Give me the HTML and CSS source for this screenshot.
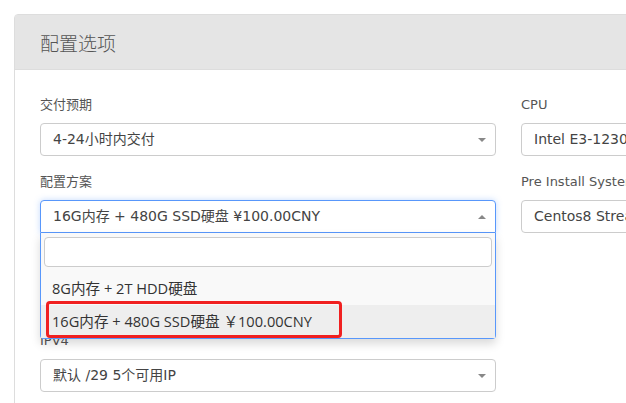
FILE: index.html
```html
<!DOCTYPE html>
<html lang="zh-CN">
<head>
<meta charset="utf-8">
<title>配置选项</title>
<link rel="stylesheet" href="styles.css">
</head>
<body>
<div class="panel">
  <div class="panel-heading">配置选项</div>
  <div class="panel-body">
    <div class="col">
      <div class="group">
        <div class="label">交付预期</div>
        <div class="select"><span class="value">4-24小时内交付</span><span class="arrow down"></span></div>
      </div>
      <div class="group group-tall">
        <div class="label">配置方案</div>
        <div class="select-wrap">
          <div class="select open"><span class="value">16G内存 + 480G SSD硬盘 ¥100.00CNY</span><span class="arrow up"></span></div>
          <div class="dropdown">
            <div class="search"></div>
            <div class="option">8G内存 + 2T HDD硬盘</div>
            <div class="option active">16G内存 + 480G SSD硬盘 ￥100.00CNY</div>
            <div class="mark"></div>
          </div>
        </div>
      </div>
      <div class="group">
        <div class="label">IPV4</div>
        <div class="select"><span class="value">默认 /29 5个可用IP</span><span class="arrow down"></span></div>
      </div>
    </div>
    <div class="col">
      <div class="group">
        <div class="label">CPU</div>
        <div class="select"><span class="value">Intel E3-1230 v3</span><span class="arrow down"></span></div>
      </div>
      <div class="group">
        <div class="label">Pre Install System</div>
        <div class="select"><span class="value">Centos8 Stream</span><span class="arrow down"></span></div>
      </div>
    </div>
  </div>
</div>
</body>
</html>
```

FILE: styles.css
```css
html, body {
  margin: 0;
  padding: 0;
  overflow: hidden;
  background: #fff;
}
body {
  font-family: "DejaVu Sans", "Noto Sans CJK SC", sans-serif;
  color: #444;
  width: 626px;
  height: 403px;
}
.panel {
  margin: 14px 0 0 14px;
  width: 1003px;
  border: 1px solid #ddd;
  border-radius: 4px 0 0 0;
  box-sizing: border-box;
}
.panel-heading {
  height: 55px;
  background: #e5e5e5;
  border-bottom: 1px solid #ddd;
  padding-left: 25px;
  font-family: "Noto Sans CJK SC", sans-serif;
  font-weight: 300;
  font-size: 19px;
  line-height: 56px;
  color: #555;
  box-sizing: border-box;
}
.panel-body {
  display: grid;
  grid-template-columns: 456px 456px;
  column-gap: 25px;
  padding: 26px 25px 20px;
}
.group {
  margin-bottom: 17px;
}
.group-tall {
  margin-bottom: 99px;
}
.label {
  font-size: 13px;
  line-height: 18px;
  height: 18px;
  margin-bottom: 9px;
  color: #555;
}
.select {
  position: relative;
  height: 33px;
  border: 1px solid #ccc;
  border-radius: 4px;
  box-sizing: border-box;
  padding-left: 12px;
  font-size: 14px;
  line-height: 31px;
  color: #444;
  background: #fff;
  white-space: nowrap;
}
.arrow {
  position: absolute;
  right: 9px;
  top: 14px;
  width: 0;
  height: 0;
  border-left: 4px solid transparent;
  border-right: 4px solid transparent;
}
.arrow.down {
  border-top: 4px solid #888;
}
.arrow.up {
  border-bottom: 4px solid #888;
}
.select-wrap {
  position: relative;
  height: 33px;
}
.select.open {
  border-color: #5897fb;
  border-radius: 4px 4px 0 0;
  box-shadow: 0 0 6px rgba(88, 151, 251, 0.35);
}
.dropdown {
  position: absolute;
  left: 0;
  right: 0;
  top: 33px;
  z-index: 5;
  border: 1px solid #5897fb;
  border-top: none;
  border-radius: 0 0 4px 4px;
  background: #f9f9f9;
  box-shadow: 0 5px 10px rgba(0, 0, 0, 0.15);
  padding: 4px 0 0;
}
.search {
  margin: 0 3px 5px;
  height: 30px;
  border: 1px solid #ccc;
  border-radius: 4px;
  background: #fff;
  box-sizing: border-box;
}
.option {
  height: 33px;
  line-height: 33px;
  padding-left: 11px;
  font-family: "Open Sans", "Noto Sans CJK SC", sans-serif;
  font-size: 14.6px;
  color: #333;
  white-space: nowrap;
}
.option.active {
  background: #eee;
}
.mark {
  position: absolute;
  left: 5px;
  top: 68px;
  width: 296px;
  height: 37px;
  border: 3px solid #f02020;
  border-radius: 4px;
  box-sizing: border-box;
}
```
